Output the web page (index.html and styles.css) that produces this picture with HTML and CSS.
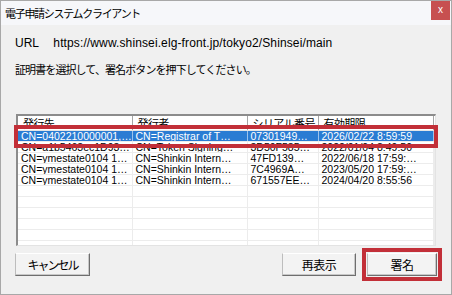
FILE: index.html
```html
<!DOCTYPE html>
<html lang="ja">
<head>
    <meta charset="UTF-8">
    <title>電子申請システムクライアント</title>
    <link rel="stylesheet" href="styles.css">
</head>
<body>
    <div class="window">
        <div class="titlebar">
            <span class="title">電子申請システムクライアント</span>
            <span class="close">x</span>
        </div>
        <div class="content">
            <div class="url-line">
                <span class="url-label">URL</span>
                <span class="url">https://www.shinsei.elg-front.jp/tokyo2/Shinsei/main</span>
            </div>
            <div class="message">証明書を選択して、署名ボタンを押下してください。</div>

            <div class="list-wrap">
                <div class="list">
                    <table class="cert-table">
                        <colgroup>
                            <col class="c1"><col class="c2"><col class="c3"><col class="c4"><col>
                        </colgroup>
                        <thead>
                            <tr>
                                <th>発行先</th>
                                <th>発行者</th>
                                <th>シリアル番号</th>
                                <th>有効期限</th>
                                <th class="filler"></th>
                            </tr>
                        </thead>
                        <tbody>
                            <tr class="selected">
                                <td>CN=0402210000001,…</td>
                                <td>CN=Registrar of T…</td>
                                <td>07301949…</td>
                                <td>2026/02/22 8:59:59</td>
                                <td></td>
                            </tr>
                            <tr>
                                <td>CN=a1b5463ec1D93…</td>
                                <td>CN=Token Signing…</td>
                                <td>3D50F585…</td>
                                <td>2022/01/04 8:49:50</td>
                                <td></td>
                            </tr>
                            <tr>
                                <td>CN=ymestate0104 1…</td>
                                <td>CN=Shinkin Intern…</td>
                                <td>47FD139…</td>
                                <td>2022/06/18 17:59:…</td>
                                <td></td>
                            </tr>
                            <tr>
                                <td>CN=ymestate0104 1…</td>
                                <td>CN=Shinkin Intern…</td>
                                <td>7C4969A…</td>
                                <td>2023/05/20 17:59:…</td>
                                <td></td>
                            </tr>
                            <tr>
                                <td>CN=ymestate0104 1…</td>
                                <td>CN=Shinkin Intern…</td>
                                <td>671557EE…</td>
                                <td>2024/04/20 8:55:56</td>
                                <td></td>
                            </tr>
                            <!-- 空行 (グリッド線のみ) -->
                            <tr><td></td><td></td><td></td><td></td><td></td></tr>
                            <tr><td></td><td></td><td></td><td></td><td></td></tr>
                            <tr><td></td><td></td><td></td><td></td><td></td></tr>
                            <tr><td></td><td></td><td></td><td></td><td></td></tr>
                            <tr><td></td><td></td><td></td><td></td><td></td></tr>
                            <tr><td></td><td></td><td></td><td></td><td></td></tr>
                        </tbody>
                    </table>
                </div>
                <div class="row-mark"></div>
            </div>

            <div class="buttons">
                <button class="btn btn-cancel">キャンセル</button>
                <div class="right-buttons">
                    <button class="btn btn-reload">再表示</button>
                    <span class="mark">
                        <button class="btn btn-sign">署名</button>
                    </span>
                </div>
            </div>
        </div>
    </div>
</body>
</html>
```

FILE: styles.css
```css
body {
    margin: 0;
    background: #ffffff;
    font-family: "Liberation Sans", "Noto Sans CJK JP", sans-serif;
    color: #000;
}
.window {
    width: 452px;
    height: 295px;
    box-sizing: border-box;
    border: 1px solid #a8a8a8;
    background: #f0f0f0;
    overflow: hidden;
}
.titlebar {
    height: 24px;
    background: #f6f7fa;
    display: flex;
    justify-content: space-between;
    align-items: flex-start;
}
.title {
    font-family: "Noto Sans CJK JP", sans-serif;
    font-size: 11px;
    letter-spacing: -1.3px;
    line-height: 24px;
    padding-left: 4px;
}
.close {
    width: 19px;
    height: 19px;
    margin-right: 1px;
    background: #c75050;
    color: #fff;
    font-size: 10px;
    line-height: 18px;
    text-align: center;
}
.content {
    padding: 0 14px;
}
.url-line {
    margin-top: 11px;
    font-size: 12px;
    line-height: 14px;
    white-space: nowrap;
}
.url-label {
    display: inline-block;
    width: 35px;
}
.url {
    letter-spacing: 0.12px;
}
.message {
    margin-top: 12px;
    font-family: "Noto Sans CJK JP", sans-serif;
    font-size: 11px;
    letter-spacing: -0.9px;
    line-height: 14px;
}
.list-wrap {
    position: relative;
    margin: 38px 0 0 1px;
    width: 420px;
}
.list {
    height: 132px;
    box-sizing: border-box;
    background: #fff;
    border-style: solid;
    border-width: 2px 1px 1px 2px;
    border-color: #8c8c8c #e3e3e3 #e3e3e3 #8c8c8c;
    overflow: hidden;
}
.cert-table {
    width: 100%;
    table-layout: fixed;
    border-collapse: collapse;
    font-size: 10.5px;
}
.c1 { width: 114px; }
.c2 { width: 115px; }
.c3 { width: 71px; }
.c4 { width: 115px; }
.cert-table th {
    height: 14px;
    padding: 0 0 0 5px;
    text-align: left;
    font-family: "Noto Sans CJK JP", sans-serif;
    font-weight: normal;
    font-size: 11px;
    letter-spacing: -0.6px;
    line-height: 14px;
    border-right: 1px solid #a5a5a5;
    border-bottom: 1px solid #e5e5e5;
    white-space: nowrap;
    overflow: hidden;
}
.cert-table th.filler {
    border-right: none;
}
.cert-table td {
    height: 10px;
    padding: 0 0 0 3px;
    line-height: 10px;
    border-right: 1px solid #ececec;
    border-bottom: 1px solid #ececec;
    white-space: nowrap;
    overflow: hidden;
}
.cert-table tr.selected td {
    background: #2a7cd3;
    color: #fff;
    border-right-color: #9cc3ec;
}
.row-mark {
    position: absolute;
    left: -2px;
    top: 11px;
    width: 424px;
    height: 23px;
    box-sizing: border-box;
    border: 4px solid #c22f38;
}
.buttons {
    display: flex;
    justify-content: space-between;
    align-items: center;
    margin: 2px -5px 0 0;
}
.right-buttons {
    display: flex;
    align-items: center;
    gap: 6px;
}
.mark {
    display: block;
    padding: 1px;
    border: 4px solid #c22f38;
}
.btn {
    display: block;
    height: 23px;
    padding: 0;
    background: #f3f3f3;
    border: 1px solid;
    border-color: #ffffff #6e6e6e #6e6e6e #bdbdbd;
    box-shadow: inset -1px -1px 0 #c8c8c8;
    font-family: "Noto Sans CJK JP", sans-serif;
    font-size: 12px;
    letter-spacing: -0.5px;
    color: #000;
}
.btn-cancel {
    width: 75px;
    letter-spacing: -2px;
}
.btn-reload {
    width: 74px;
}
.btn-sign {
    width: 70px;
}
```
